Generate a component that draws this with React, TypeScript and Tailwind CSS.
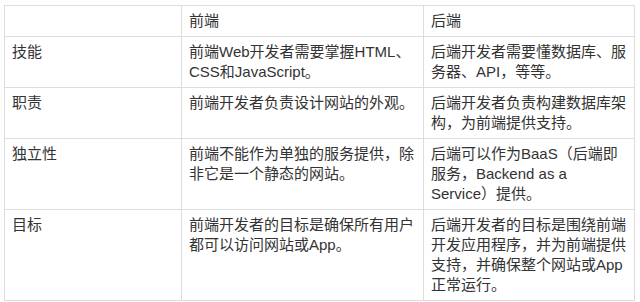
const rows: [string, string, string][] = [
  ["", "前端", "后端"],
  ["技能", "前端Web开发者需要掌握HTML、CSS和JavaScript。", "后端开发者需要懂数据库、服务器、API，等等。"],
  ["职责", "前端开发者负责设计网站的外观。", "后端开发者负责构建数据库架构，为前端提供支持。"],
  ["独立性", "前端不能作为单独的服务提供，除非它是一个静态的网站。", "后端可以作为BaaS（后端即服务，Backend as a Service）提供。"],
  ["目标", "前端开发者的目标是确保所有用户都可以访问网站或App。", "后端开发者的目标是围绕前端开发应用程序，并为前端提供支持，并确保整个网站或App正常运行。"],
]

export default function App() {
  return (
    <div className="w-[640px] h-[302px] bg-white pl-[4px] pt-[5px] font-['Liberation_Sans','Noto_Sans_CJK_SC',sans-serif] text-[15px] leading-[20px] text-[#333] [text-spacing-trim:space-all]">
      <table className="table-fixed border-collapse w-[630px]">
        <colgroup>
          <col className="w-[177px]" />
          <col className="w-[242px]" />
          <col className="w-[211px]" />
        </colgroup>
        <tbody>
          {rows.map((r, i) => (
            <tr key={i}>
              {r.map((c, j) => (
                <td key={j} className="border border-[#ddd] align-top px-[7px] pt-[5px] pb-[5px]">
                  {c}
                </td>
              ))}
            </tr>
          ))}
        </tbody>
      </table>
    </div>
  )
}
